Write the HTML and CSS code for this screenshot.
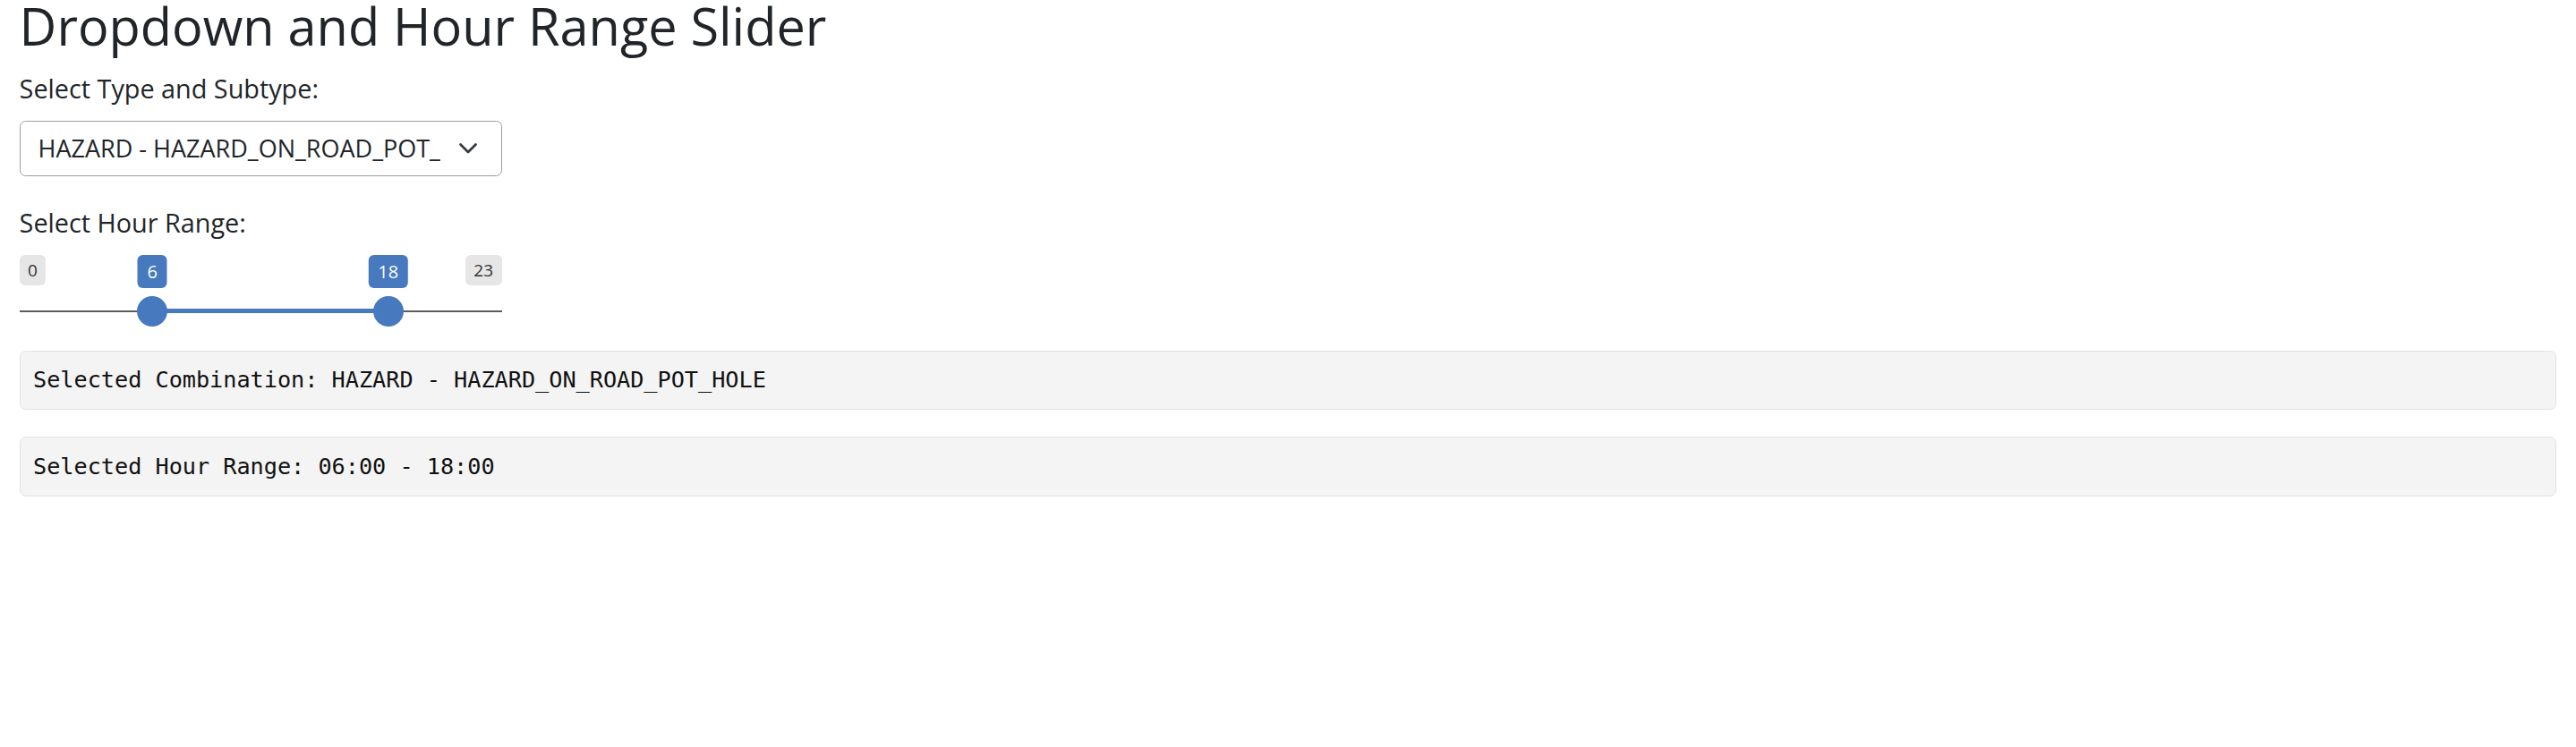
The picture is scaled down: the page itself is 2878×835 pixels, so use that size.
FILE: index.html
```html
<!DOCTYPE html>
<html lang="en">
<head>
<meta charset="utf-8">
<title>Dropdown and Hour Range Slider</title>
<link rel="stylesheet" href="styles.css">
</head>
<body>
<div class="page">
  <h2 class="title">Dropdown and Hour Range Slider</h2>

  <div class="field field-select">
    <label class="field-label" for="combo">Select Type and Subtype:</label>
    <div class="select-wrap">
      <select id="combo" class="select">
        <option>HAZARD - HAZARD_ON_ROAD_POT_HOLE</option>
      </select>
      <svg class="chevron" viewBox="0 0 22 14" aria-hidden="true">
        <path d="M2.5 2.5 L11 11 L19.5 2.5" fill="none" stroke="#343a40" stroke-width="2.8" stroke-linecap="round" stroke-linejoin="round"/>
      </svg>
    </div>
  </div>

  <div class="field field-slider">
    <label class="field-label">Select Hour Range:</label>
    <div class="slider">
      <span class="irs-line"></span>
      <span class="irs-bar" style="left: 148.7px; width: 263.5px;"></span>
      <span class="irs-min">0</span>
      <span class="irs-max">23</span>
      <span class="irs-single" style="left: 148.7px;">6</span>
      <span class="irs-single" style="left: 412.2px;">18</span>
      <span class="irs-handle" style="left: 131.7px;"></span>
      <span class="irs-handle" style="left: 395.2px;"></span>
    </div>
  </div>

  <pre class="output">Selected Combination: HAZARD - HAZARD_ON_ROAD_POT_HOLE</pre>
  <pre class="output">Selected Hour Range: 06:00 - 18:00</pre>
</div>
</body>
</html>
```

FILE: styles.css
```css
html, body {
  margin: 0;
  padding: 0;
  background: #ffffff;
}

body {
  font-family: "Open Sans", "Noto Sans", sans-serif;
  color: #212529;
}

.page {
  padding: 0 21.6px;
}

.title {
  margin: 0 0 19.6px 0;
  font-size: 57.6px;
  line-height: 57.6px;
  font-weight: 400;
  color: #212529;
}

.field-label {
  display: block;
  font-size: 28.8px;
  line-height: 43.2px;
  margin-bottom: 14.6px;
}

.field-select {
  margin-bottom: 30.2px;
}

.select-wrap {
  position: relative;
  width: 539px;
}

.select {
  -webkit-appearance: none;
  appearance: none;
  display: block;
  box-sizing: border-box;
  width: 539px;
  height: 62px;
  margin: 0;
  padding: 0 68px 0 20px;
  font-family: "Open Sans", "Noto Sans", sans-serif;
  font-size: 27px;
  color: #212529;
  background: #ffffff;
  border: 1px solid #9a9ea3;
  border-radius: 6.5px;
  outline: none;
}

.chevron {
  position: absolute;
  right: 26.6px;
  top: 24px;
  width: 22px;
  height: 14px;
  pointer-events: none;
}

.field-slider {
  margin-bottom: 25.7px;
}

.slider {
  position: relative;
  width: 539px;
  height: 81px;
}

.irs-line {
  position: absolute;
  left: 0;
  right: 0;
  top: 62px;
  height: 2px;
  background: #5c5c5c;
}

.irs-bar {
  position: absolute;
  top: 60.5px;
  height: 5px;
  background: #4679bd;
}

.irs-min,
.irs-max {
  position: absolute;
  top: 0;
  font-size: 19px;
  line-height: 24px;
  padding: 5px 9.5px;
  border-radius: 6px;
  background: #e6e6e6;
  color: #333333;
}

.irs-min {
  left: 0;
}

.irs-max {
  right: 0;
}

.irs-single {
  position: absolute;
  top: 0;
  transform: translateX(-50%);
  font-size: 20px;
  line-height: 27px;
  padding: 5px 10.8px;
  border-radius: 6px;
  background: #4679bd;
  color: #ffffff;
}

.irs-handle {
  position: absolute;
  top: 46px;
  width: 34px;
  height: 34px;
  border-radius: 50%;
  background: #4679bd;
}

.output {
  box-sizing: border-box;
  margin: 0 0 29.8px 0;
  padding: 14.4px;
  font-family: "DejaVu Sans Mono", "Liberation Mono", monospace;
  font-size: 25.2px;
  line-height: 36px;
  color: #111111;
  background: #f4f4f4;
  border: 1px solid #e2e2e2;
  border-radius: 7px;
  white-space: pre;
}
```
